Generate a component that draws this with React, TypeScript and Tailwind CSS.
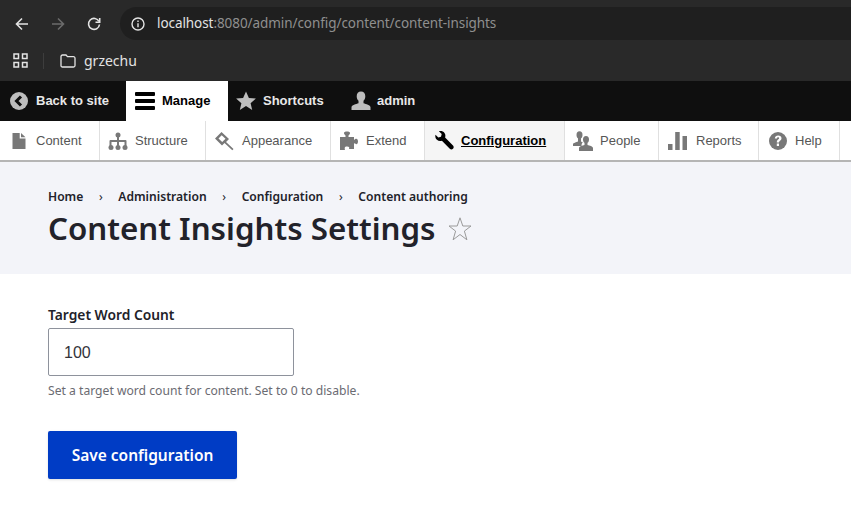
const grey = '#787878';

function BackIcon() {
  return (
    <svg width="18" height="18" viewBox="0 0 18 18" className="shrink-0">
      <circle cx="9" cy="9" r="9" fill="#bebebe" />
      <path d="M11 4.500 6.500 9l4.500 4.500" fill="none" stroke="#0f0f0f" strokeWidth="3" />
    </svg>
  );
}

function TrayIcon({ name }: { name: string }) {
  const fill = name === 'config' ? '#000' : grey;
  return (
    <svg width="20" height="20" viewBox="0 0 20 20" fill={fill} className="shrink-0">
      {name === 'content' && <path d="M3.500 2h7.200v5.500h5.800V18h-13zM12 2l4.500 4.300H12z" />}
      {name === 'structure' && (
        <>
          <circle cx="10" cy="4" r="2.500" />
          <circle cx="3" cy="16.500" r="2.500" />
          <circle cx="10" cy="16.500" r="2.500" />
          <circle cx="17" cy="16.500" r="2.500" />
          <path d="M9 5h2v4h6.500a1 1 0 0 1 1 1v5h-2v-4H11v4H9v-4H3.500v4h-2v-5a1 1 0 0 1 1-1H9z" />
        </>
      )}
      {name === 'appearance' && <path d="M0 7.500 6.500 1l7.500 7-3 3 7.500 7-1.200 1.200L9.500 12l-2.500 2.500zM3.500 7.500l3.700 3.500 3.300-3.200L6.700 4.300z" />}
      {name === 'extend' && (
        <path d="M1 6h5.500V4.500C5.500 3.500 5 3 5 2c0-1 1.200-1.500 3-1.500S11 1 11 2c0 1-.5 1.500-1.500 2.500V6H15v3c1-.8 1.500-1.200 2.300-1.200 1 0 1.700 1.200 1.700 2.700s-.7 2.700-1.700 2.700c-.8 0-1.300-.4-2.300-1.200v6H10c.5-1.500.5-2.500-2-2.500S5.500 17 6 19H1z" />
      )}
      {name === 'config' && (
        <path d="M1.500 3.800 4.300 6.600 7 5.800 7.700 3 4.900.3C7 -.3 9.300.3 10.500 2c1 1.300 1.100 3 .6 4.400l7.900 8.100c.9 1 .9 2.300 0 3.200-1 1-2.300.9-3.200 0L7.900 9.800c-1.800.6-3.600.3-5-1C1.500 7.500 1 5.500 1.500 3.800z" />
      )}
      {name === 'people' && (
        <>
          <ellipse cx="6.500" cy="4" rx="3" ry="3.700" />
          <path d="M5 7h3v3.500c.7.300 1.200.5 1.800.8-.8.800-1.300 2-1.300 3.700H0v-1.800c0-1.200 3.500-2 5-2.700z" />
          <ellipse cx="13" cy="8.500" rx="3" ry="3.500" />
          <path d="M11.500 11h3v3c2 .6 5.500 1.300 5.500 3v3H6v-3c0-1.700 3.500-2.400 5.500-3z" />
        </>
      )}
      {name === 'reports' && <path d="M0 13h4.500v6H0zM7.200 1h4.500v18H7.200zM14.500 5H19v14h-4.500z" />}
      {name === 'help' && (
        <>
          <circle cx="10" cy="10" r="9" />
          <path d="M6.800 7.500c.2-2 1.500-3 3.400-3s3.300 1 3.300 2.700c0 2.400-2.500 2.400-2.500 4.300H8.800c0-3 2.300-3 2.300-4.200 0-.6-.4-1-1-1-.7 0-1 .4-1.100 1.200zM8.800 12.600h2.200v2.400H8.800z" fill="#fff" />
        </>
      )}
    </svg>
  );
}

const trayItems = [
  { name: 'content', label: 'Content', w: 'w-[100px]', pad: 'pl-[9px]', gap: 'gap-[7px]' },
  { name: 'structure', label: 'Structure', w: 'w-[106px]', pad: 'pl-[8px]', gap: 'gap-[7px]' },
  { name: 'appearance', label: 'Appearance', w: 'w-[125px]', pad: 'pl-[9px]', gap: 'gap-[7px]' },
  { name: 'extend', label: 'Extend', w: 'w-[94px]', pad: 'pl-[8px]', gap: 'gap-[7px]' },
  { name: 'config', label: 'Configuration', w: 'w-[140px]', pad: 'pl-[9px]', gap: 'gap-[7px]' },
  { name: 'people', label: 'People', w: 'w-[94px]', pad: 'pl-[8px]', gap: 'gap-[7px]' },
  { name: 'reports', label: 'Reports', w: 'w-[100px]', pad: 'pl-[9px]', gap: 'gap-[8px]' },
  { name: 'help', label: 'Help', w: 'w-[81px]', pad: 'pl-[9px]', gap: 'gap-[7px]' },
];

export default function App() {
  return (
    <div className="h-[525px] w-[851px] overflow-hidden bg-white font-['Liberation_Sans',sans-serif]">
      {/* Browser chrome */}
      <div className="h-[81px] bg-[#292929] font-['Noto_Sans',sans-serif]">
        <div className="flex h-[40px] items-center pt-[7px]">
          <div className="flex w-[120px] shrink-0 items-center pl-[15px]">
            <svg width="14" height="14" viewBox="0 0 14 14" fill="none" stroke="#e3e3e3" strokeWidth="1.600">
              <path d="M13 7H2M7 1.500 1.500 7 7 12.500" />
            </svg>
            <svg width="14" height="14" viewBox="0 0 14 14" fill="none" stroke="#6b6b6b" strokeWidth="1.600" className="ml-[22px]">
              <path d="M1 7h11M7 1.500 12.500 7 7 12.500" />
            </svg>
            <svg width="14" height="14" viewBox="0 0 14 14" fill="none" stroke="#e3e3e3" strokeWidth="1.600" className="ml-[22px]">
              <path d="M12 4.500A5.500 5.500 0 1 0 12.500 7.500" />
              <path d="M12.700 1v4.200H8.500" />
            </svg>
          </div>
          <div className="flex h-[33px] flex-1 items-center rounded-l-full bg-[#1f1f1f] pl-[10px]">
            <svg width="16" height="16" viewBox="0 0 16 16" fill="none" stroke="#e3e3e3" strokeWidth="1.400" className="shrink-0">
              <circle cx="8" cy="8" r="6" />
              <path d="M8 7.200v4M8 4.500v1.500" />
            </svg>
            <span className="ml-[11px] text-[13.500px] tracking-[-0.07px] text-[#e3e3e3]">
              localhost<span className="text-[#8f8f8f]">:8080/admin/config/content/content-insights</span>
            </span>
          </div>
        </div>
        <div className="flex h-[41px] items-center pl-[13px]">
          <svg width="15" height="15" viewBox="0 0 15 15" fill="none" stroke="#e3e3e3" strokeWidth="1.500">
            <path d="M1 1h4.500v4.500H1zM9.500 1H14v4.500H9.500zM1 9.500h4.500V14H1zM9.500 9.500H14V14H9.500z" />
          </svg>
          <div className="ml-[15px] h-[16px] w-px bg-[#3d3d3d]" />
          <svg width="16" height="14" viewBox="0 0 16 14" fill="none" stroke="#e3e3e3" strokeWidth="1.300" className="ml-[16px]">
            <path d="M1 2.500A1.500 1.500 0 0 1 2.500 1h3.500l1.500 1.700h6a1.500 1.500 0 0 1 1.500 1.500v7.300a1.500 1.500 0 0 1-1.500 1.500h-11A1.500 1.500 0 0 1 1 12z" />
          </svg>
          <span className="ml-[8px] text-[14px] leading-[18px] text-[#e3e3e3]">grzechu</span>
        </div>
      </div>

      {/* Admin toolbar */}
      <div className="flex h-[40px] items-stretch bg-[#0f0f0f] text-[13px] font-bold text-[#e8e8e8]">
        <a className="flex w-[126px] items-center gap-[8px] pl-[10px]">
          <BackIcon />
          Back to site
        </a>
        <a className="flex w-[102px] items-center gap-[7px] bg-white pl-[9px] text-black">
          <svg width="20" height="20" viewBox="0 0 20 20" fill="#000" className="shrink-0">
            <rect y="1" width="20" height="4" rx="1" />
            <rect y="8" width="20" height="4" rx="1" />
            <rect y="15" width="20" height="4" rx="1" />
          </svg>
          Manage
        </a>
        <a className="flex w-[115px] items-center gap-[7px] pl-[8px]">
          <svg width="20" height="20" viewBox="0 0 20 20" fill="#bebebe" className="shrink-0">
            <path d="M10 .5l2.900 6.400 7 .7-5.300 4.600 1.600 6.900L10 15l-6.200 4.100 1.600-6.900L.1 7.600l7-.7z" />
          </svg>
          Shortcuts
        </a>
        <a className="flex items-center gap-[6px] pl-[8px]">
          <svg width="20" height="20" viewBox="0 0 20 20" fill="#bebebe" className="shrink-0">
            <path d="M10 .5c2.700 0 4.300 2 4.300 4.700 0 2-.8 3.500-1.800 4.500v2.500c2.400.8 7 1.600 7 4v2.800H.5v-2.800c0-2.400 4.600-3.200 7-4V9.700c-1-1-1.800-2.500-1.800-4.500C5.700 2.500 7.300.5 10 .5z" />
          </svg>
          admin
        </a>
      </div>

      {/* Tray */}
      <div className="flex h-[41px] items-stretch border-b-2 border-[#b5b5b5] bg-white text-[13px] text-[#565656]">
        {trayItems.map((item) => (
          <a
            key={item.name}
            className={`flex items-center border-r border-[#e0e0e0] ${item.w} ${item.pad} ${item.gap} ${item.name === 'config' ? 'bg-[#f5f5f5] font-bold text-black underline' : ''}`}
          >
            <TrayIcon name={item.name} />
            {item.label}
          </a>
        ))}
      </div>

      {/* Page header */}
      <div className="h-[112px] bg-[#f3f4f9] px-[48px] pt-[27px] font-['Noto_Sans',sans-serif] text-[#22222a]">
        <div className="flex h-[16px] items-center text-[12.100px] font-semibold leading-[16px]">
          <span>Home</span>
          <span className="w-[35px] text-center font-normal">›</span>
          <span>Administration</span>
          <span className="w-[35px] text-center font-normal">›</span>
          <span>Configuration</span>
          <span className="w-[35px] text-center font-normal">›</span>
          <span>Content authoring</span>
        </div>
        <div className="mt-[3px] flex items-center">
          <h1 className="text-[31.300px] font-semibold leading-[40px]">Content Insights Settings</h1>
          <svg width="24" height="24" viewBox="0 0 24 24" fill="none" stroke="#9a9a9a" strokeWidth="1" className="ml-[12px] mt-[2px]">
            <path d="M12 .8l2.800 8.200h8.200l-6.600 5.100 2.500 8.700-6.900-5.300-6.900 5.300 2.500-8.700L1 9h8.200z" />
          </svg>
        </div>
      </div>

      {/* Form */}
      <form className="px-[48px] pt-[32px] font-['Noto_Sans',sans-serif]">
        <label className="block text-[13.800px] font-semibold leading-[18px] text-[#22222a]">Target Word Count</label>
        <input
          readOnly
          value="100"
          className="mt-[4px] block h-[48px] w-[246px] rounded-[2px] border border-[#8e929c] bg-white px-[15px] pt-[2px] font-['Liberation_Sans',sans-serif] text-[16px] text-[#33333a]"
        />
        <p className="mt-[7px] text-[12.150px] leading-[16px] text-[#6b6b72]">Set a target word count for content. Set to 0 to disable.</p>
        <button
          type="button"
          className="mt-[32px] block h-[48px] w-[189px] rounded-[2px] bg-[#003cc5] pt-[1px] text-[15.500px] font-semibold text-white shadow-sm"
        >
          Save configuration
        </button>
      </form>
    </div>
  );
}
